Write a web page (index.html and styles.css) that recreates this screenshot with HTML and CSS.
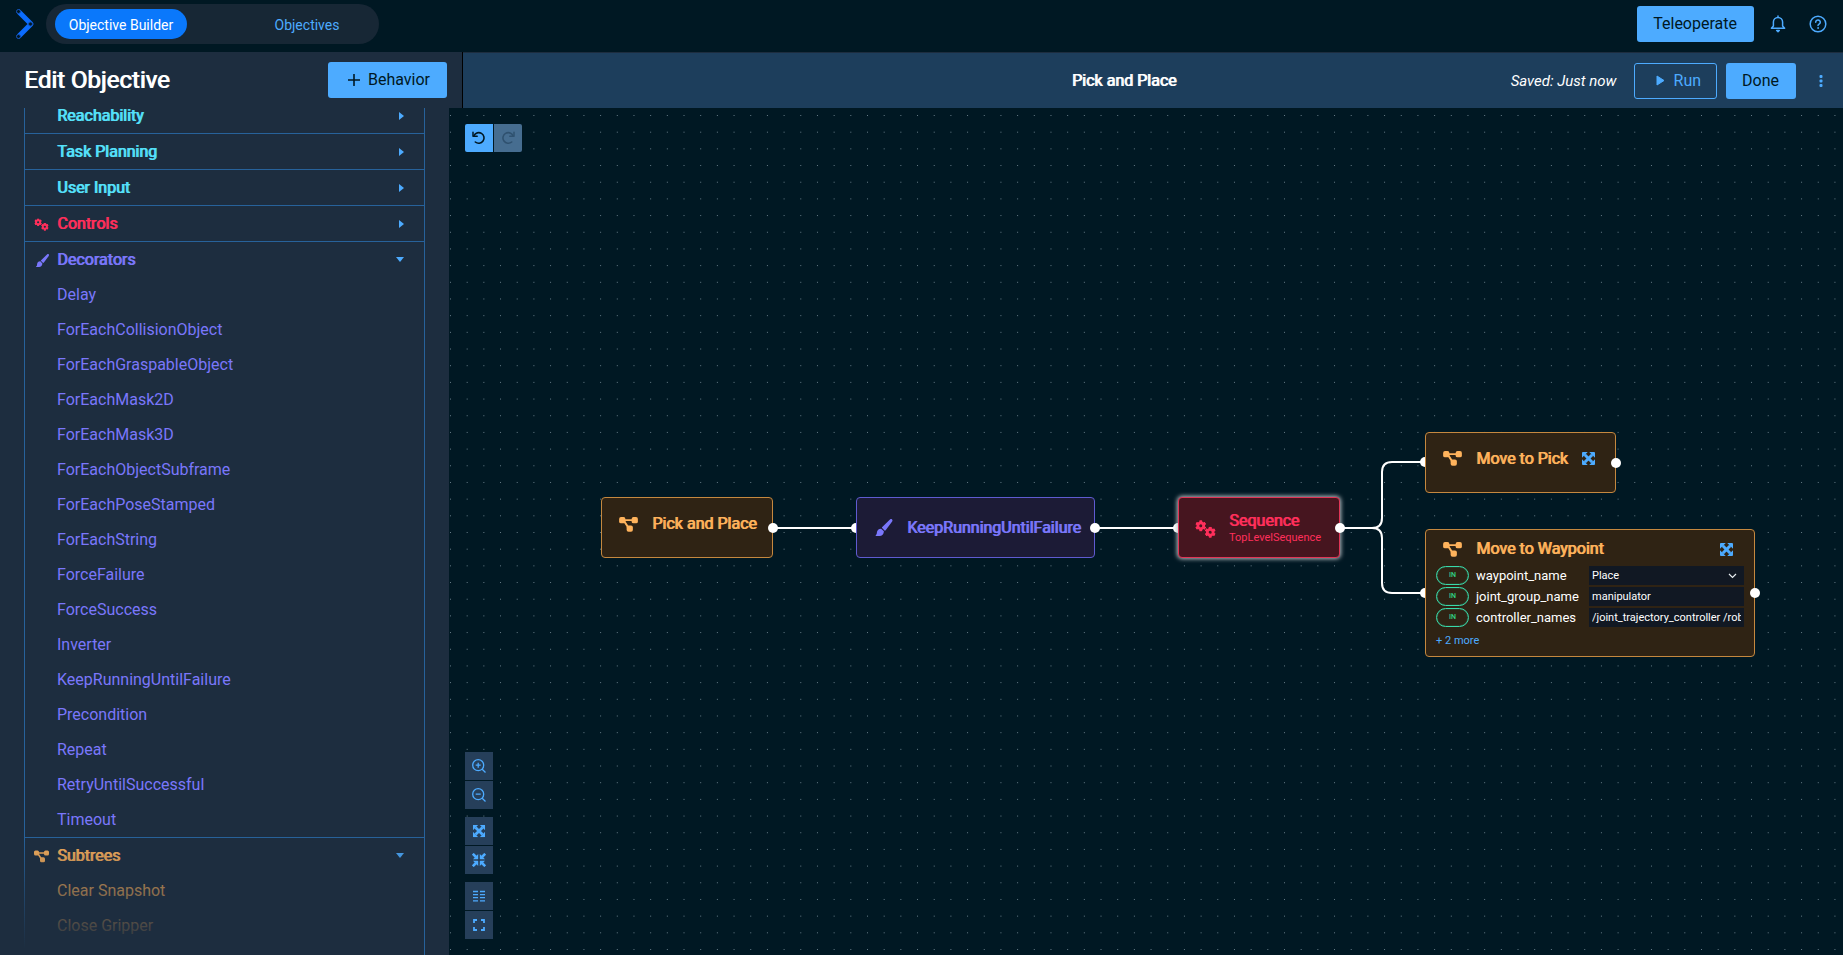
FILE: index.html
```html
<!DOCTYPE html>
<html lang="en">
<head>
<meta charset="utf-8">
<title>Objective Builder</title>
<link rel="stylesheet" href="styles.css">
</head>
<body>
<svg class="sprite" aria-hidden="true">
  <symbol id="gear" viewBox="0 0 20 20">
    <circle cx="10" cy="10" r="5" fill="none" stroke="currentColor" stroke-width="4.8"/>
    <g fill="currentColor">
      <rect x="7.500" y="0.4" width="5" height="19.2" rx="1" clip-path="url(#teeth)"/>
      <rect x="7.500" y="0.4" width="5" height="19.2" rx="1" clip-path="url(#teeth)" transform="rotate(60 10 10)"/>
      <rect x="7.500" y="0.4" width="5" height="19.2" rx="1" clip-path="url(#teeth)" transform="rotate(120 10 10)"/>
    </g>
  </symbol>
  <clipPath id="teeth"><path d="M0 0h20v5H0zM0 15h20v5H0z"/></clipPath>
  <symbol id="gears" viewBox="0 0 40 34">
    <use href="#gear" x="0" y="0" width="22" height="22"/>
    <use href="#gear" x="18" y="12" width="22" height="22"/>
  </symbol>
  <symbol id="brush" viewBox="0 0 24 24">
    <path fill="currentColor" d="M23.4.6c.8.8.7 1.900.1 2.900L14.600 15.600c-.4.500-.900.800-1.500.900l-4.100-4c.1-.6.400-1.100.900-1.500L20.800.5c.9-.7 1.900-.6 2.600.1zM8 13.600l3.800 3.800C11.900 21 9.300 24 5.600 24H.8C.1 24-.2 23.200.3 22.800c1.700-1.200 1.600-2.600 1.700-4C2.300 15.800 4.700 13.400 8 13.600z"/>
  </symbol>
  <symbol id="tree" viewBox="0 0 30 24">
    <path d="M5 5h20M7 5l9 14" fill="none" stroke="currentColor" stroke-width="3"/>
    <g fill="currentColor"><rect width="10" height="10" rx="3"/><rect x="20" width="10" height="10" rx="3"/><rect x="12" y="13.500" width="10" height="10" rx="3"/></g>
  </symbol>
  <symbol id="expand" viewBox="0 0 14 14">
    <path d="M3 3l8 8M11 3l-8 8" stroke="currentColor" stroke-width="3.200"/>
    <path fill="currentColor" d="M1 0H6.200L0 6.200V1Q0 0 1 0zM7.800 0H13q1 0 1 1V6.200zM0 7.800L6.200 14H1q-1 0-1-1zM14 7.800V13q0 1-1 1H7.800z"/>
  </symbol>
  <symbol id="compress" viewBox="0 0 14 14">
    <path d="M.8.8L4 4M13.200.8L10 4M.8 13.200L4 10M13.200 13.200L10 10" stroke="currentColor" stroke-width="2.600"/>
    <path fill="currentColor" d="M6.200 1v4.600q0 .6-.6.600H1zM7.800 1v4.600q0 .6.600.600H13zM6.200 13V8.400q0-.6-.6-.6H1zM7.800 13V8.400q0-.6.600-.6H13z"/>
  </symbol>
  <symbol id="undo" viewBox="0 0 14 14">
    <path d="M2 4.600A5.300 5.300 0 1 1 3.300 11" fill="none" stroke="currentColor" stroke-width="1.600" stroke-linecap="round"/>
    <path d="M1 1.200v4h4.200" fill="none" stroke="currentColor" stroke-width="1.500" stroke-linecap="round" stroke-linejoin="round"/>
  </symbol>
</svg>

<header class="topbar">
  <svg class="logo" viewBox="0 0 20 32" aria-label="Home">
    <path d="M4 4l12 12L4 28" fill="none" stroke="#0b6cff" stroke-width="5" stroke-linecap="round" stroke-linejoin="round"/>
    <g fill="#001823" stroke="#1552b5" stroke-width="1"><circle cx="3.500" cy="3.500" r="2"/><circle cx="15.500" cy="16" r="2"/><circle cx="3.500" cy="28.500" r="2"/></g>
  </svg>
  <nav class="tabs">
    <a class="tab tab-active" href="#builder">Objective Builder</a>
    <a class="tab" href="#objectives">Objectives</a>
  </nav>
  <div class="topbar-actions">
    <button class="btn">Teleoperate</button>
    <button class="icon-btn" aria-label="Notifications">
      <svg width="16" height="18" viewBox="0 0 16 18" fill="none" stroke="currentColor" stroke-width="1.500" stroke-linecap="round" stroke-linejoin="round"><path d="M8 1v1.200M3.400 11V7a4.600 4.600 0 0 1 9.200 0v4l2 2.300H1.400z"/><path d="M6.700 15.500h2.600L8 16.600z"/></svg>
    </button>
    <button class="icon-btn help" aria-label="Help">
      <svg width="18" height="18" viewBox="0 0 18 18" fill="none" stroke="currentColor" stroke-width="1.500" stroke-linecap="round"><circle cx="9" cy="9" r="7.800"/><path d="M6.700 7.300a2.300 2.100 0 1 1 3.600 1.600C9.500 9.400 9 9.600 9 10.500"/><circle cx="9" cy="13" r=".5" fill="currentColor" stroke-width=".8"/></svg>
    </button>
  </div>
</header>

<div class="subbar">
  <div class="side-head">
    <h1 class="side-title">Edit Objective</h1>
    <button class="btn btn-behavior"><svg width="12" height="12" viewBox="0 0 12 12"><path d="M6 .5v11M.5 6h11" stroke="currentColor" stroke-width="1.600" stroke-linecap="round"/></svg>Behavior</button>
  </div>
  <div class="toolbar">
    <h2 class="doc-title">Pick and Place</h2>
    <div class="toolbar-actions">
      <span class="saved">Saved: Just now</span>
      <button class="btn btn-outline"><svg width="9" height="11" viewBox="0 0 9 11"><path d="M1 1v9l7-4.500z" fill="currentColor" stroke="currentColor" stroke-linejoin="round"/></svg>Run</button>
      <button class="btn">Done</button>
      <button class="icon-btn more" aria-label="More"><svg width="4" height="12" viewBox="0 0 4 12" fill="currentColor"><rect x=".5" width="3" height="3" rx="1"/><rect x=".5" y="4.500" width="3" height="3" rx="1"/><rect x=".5" y="9" width="3" height="3" rx="1"/></svg></button>
    </div>
  </div>
</div>

<main class="workspace">
  <aside class="sidebar">
    <div class="tree-list">
      <button class="group cyan">Reachability<i class="arrow"></i></button>
      <button class="group cyan">Task Planning<i class="arrow"></i></button>
      <button class="group cyan">User Input<i class="arrow"></i></button>
      <button class="group red"><svg class="g-icon"><use href="#gears"/></svg>Controls<i class="arrow"></i></button>
      <button class="group violet"><svg class="g-icon g-brush"><use href="#brush"/></svg>Decorators<i class="arrow arrow-down"></i></button>
      <ul class="items violet">
        <li>Delay</li><li>ForEachCollisionObject</li><li>ForEachGraspableObject</li><li>ForEachMask2D</li><li>ForEachMask3D</li><li>ForEachObjectSubframe</li><li>ForEachPoseStamped</li><li>ForEachString</li><li>ForceFailure</li><li>ForceSuccess</li><li>Inverter</li><li>KeepRunningUntilFailure</li><li>Precondition</li><li>Repeat</li><li>RetryUntilSuccessful</li><li>Timeout</li>
      </ul>
      <button class="group amber"><svg class="g-icon"><use href="#tree"/></svg>Subtrees<i class="arrow arrow-down"></i></button>
      <ul class="items amber">
        <li>Clear Snapshot</li><li>Close Gripper</li>
      </ul>
    </div>
    <div class="fade"></div>
  </aside>

  <section class="canvas">
    <svg class="wires" aria-hidden="true">
      <defs><pattern id="dots" width="20" height="20" patternUnits="userSpaceOnUse" patternTransform="translate(1 7) scale(.834)"><circle cx=".6" cy=".6" r=".6" fill="#8aa0ac"/></pattern></defs>
      <rect width="100%" height="100%" fill="url(#dots)"/>
      <g fill="none" stroke="#fff" stroke-width="2">
        <path d="M323 420H407M646 420H729M891 420H923Q933 420 933 410V364Q933 354 943 354H976M923 420Q933 420 933 430V475Q933 485 943 485H976"/>
      </g>
      <g fill="#fff"><circle cx="407" cy="420" r="5"/><circle cx="729" cy="420" r="5"/><circle cx="976" cy="354" r="5"/><circle cx="976" cy="485" r="5"/></g>
    </svg>

    <article class="node n-amber n-root"><svg class="n-icon"><use href="#tree"/></svg><h3>Pick and Place</h3><i class="port"></i></article>
    <article class="node n-violet n-keep"><svg class="n-icon n-brush"><use href="#brush"/></svg><h3>KeepRunningUntilFailure</h3><i class="port"></i></article>
    <article class="node n-red n-seq"><svg class="n-icon n-gears"><use href="#gears"/></svg><div><h3>Sequence</h3><p>TopLevelSequence</p></div><i class="port"></i></article>
    <article class="node n-amber n-pick"><svg class="n-icon"><use href="#tree"/></svg><h3>Move to Pick</h3><button class="expand" aria-label="Expand"><svg><use href="#expand"/></svg></button><i class="port"></i></article>
    <article class="node n-amber n-way">
      <div class="way-head"><svg class="n-icon"><use href="#tree"/></svg><h3>Move to Waypoint</h3><button class="expand" aria-label="Expand"><svg><use href="#expand"/></svg></button></div>
      <div class="params">
        <span class="in">IN</span><label for="p1">waypoint_name</label>
        <div class="select"><select id="p1"><option>Place</option></select><svg width="9" height="6" viewBox="0 0 9 6"><path d="M1 1l3.500 3.500L8 1" fill="none" stroke="#e8edf0" stroke-width="1.200"/></svg></div>
        <span class="in">IN</span><label for="p2">joint_group_name</label><input id="p2" type="text" value="manipulator">
        <span class="in">IN</span><label for="p3">controller_names</label><input id="p3" type="text" value="/joint_trajectory_controller /robotiq_gripper_controller">
      </div>
      <a class="more-link" href="#more">+ 2 more</a>
      <i class="port"></i>
    </article>

    <div class="history">
      <button class="tool tool-on" aria-label="Undo"><svg><use href="#undo"/></svg></button>
      <button class="tool tool-on" aria-label="Redo" disabled><svg class="flip"><use href="#undo"/></svg></button>
    </div>
    <div class="controls">
      <div class="tool-group">
        <button class="tool" aria-label="Zoom in"><svg viewBox="0 0 14 14" fill="none" stroke="currentColor" stroke-width="1.300"><circle cx="6.200" cy="6.200" r="5.500"/><path d="M10.200 10.200L13.500 13.500M6.200 3.700v5M3.700 6.200h5"/></svg></button>
        <button class="tool" aria-label="Zoom out"><svg viewBox="0 0 14 14" fill="none" stroke="currentColor" stroke-width="1.300"><circle cx="6.200" cy="6.200" r="5.500"/><path d="M10.200 10.200L13.500 13.500M3.700 6.200h5"/></svg></button>
      </div>
      <div class="tool-group">
        <button class="tool" aria-label="Expand all"><svg viewBox="-1 -1 16 16"><use href="#expand" width="14" height="14"/></svg></button>
        <button class="tool" aria-label="Collapse all"><svg><use href="#compress"/></svg></button>
      </div>
      <div class="tool-group">
        <button class="tool" aria-label="Layout"><svg viewBox="0 0 14 14" stroke="currentColor" stroke-width="1.300"><path d="M1 2.500h5M1 5.600h5M1 8.700h5M1 11.800h5M8 2.500h5M8 5.600h5M8 8.700h5M8 11.800h5"/></svg></button>
        <button class="tool" aria-label="Fit view"><svg viewBox="0 0 14 14" fill="none" stroke="currentColor" stroke-width="1.800"><path d="M2 5V2h3M9 2h3v3M12 9v3H9M5 12H2V9"/></svg></button>
      </div>
    </div>
  </section>
</main>
</body>
</html>
```
FILE: styles.css
```css
* { box-sizing: border-box; }
body {
  margin: 0;
  height: 100vh;
  display: flex;
  flex-direction: column;
  overflow: hidden;
  background: #001823;
  color: #fff;
  font: 16px/20px Roboto, "Liberation Sans", sans-serif;
}
h1, h2, h3, p, ul { margin: 0; padding: 0; }
h1, h2, h3, .group { font-weight: 400; text-shadow: 1px 0 currentColor; }
button, input, select { font: inherit; margin: 0; }
button { cursor: pointer; }
.sprite { position: absolute; width: 0; height: 0; }

.topbar { height: 52px; flex: none; display: flex; align-items: center; padding: 0 13px 4px 15px; }
.logo { width: 20px; height: 32px; margin-right: 11px; }
.tabs { display: flex; align-items: center; justify-content: space-between; width: 333px; height: 40px; border-radius: 20px; background: #172735; padding: 0 6px 0 9px; }
.tab { width: 132px; height: 30px; border-radius: 15px; font-size: 14px; line-height: 32px; text-align: center; color: #4dabff; text-decoration: none; }
.tab-active { background: #0a78fb; color: #fff; }
.topbar-actions { margin-left: auto; display: flex; align-items: center; gap: 12px; }
.help { margin-left: 4px; }

.btn { height: 36px; padding: 0 17px 0 16px; border: 0; border-radius: 3px; background: #4dabff; color: #001823; display: inline-flex; align-items: center; }
.btn-outline { background: none; border: 1px solid #4dabff; color: #4dabff; gap: 9px; padding: 0 15px 0 21px; }
.btn-behavior { gap: 8px; padding: 0 17px 0 20px; }
.icon-btn { width: 24px; height: 24px; padding: 0; border: 0; background: none; color: #4dabff; display: grid; place-items: center; }

.subbar { display: flex; flex: none; height: 56px; }
.side-head { width: 463px; flex: none; display: flex; align-items: center; justify-content: space-between; padding: 0 15px 0 24px; background: #1d2d3f; border-right: 1px solid #000; }
.side-title { font-size: 24px; line-height: 28px; }
.toolbar { flex: 1; display: grid; grid-template-columns: 1fr auto 1fr; align-items: center; background: #1d3e5c; border-top: 1px solid #1d2d3f; }
.doc-title { grid-column: 2; font-size: 16px; padding-right: 58px; }
.toolbar-actions { display: flex; align-items: center; justify-content: flex-end; gap: 9px; padding-right: 10px; white-space: nowrap; }
.saved { font-style: italic; font-size: 15px; margin-right: 8px; }
.more { margin-left: 4px; }

.workspace { flex: 1; min-height: 0; display: flex; }
.sidebar { position: relative; width: 449px; flex: none; padding-left: 24px; background: #1d2d3f; overflow: hidden; }
.tree-list { width: 401px; min-height: calc(100% + 11px); border: solid #27629b; border-width: 0 1px; margin-top: -11px; }
.group { display: flex; align-items: center; position: relative; width: 100%; height: 36px; border: 0; border-top: 1px solid #27629b; background: none; padding: 0 20px 0 32px; color: inherit; text-align: left; }
.group.cyan { color: #55e1fa; }
.g-icon { position: absolute; left: 9px; top: 12px; width: 15px; height: 13px; }
.g-brush { left: 11px; width: 13px; }
.arrow { margin-left: auto; border: solid transparent; border-width: 4px 0 4px 5px; border-left-color: #4dabff; }
.arrow-down { border-width: 5px 4px 0; border-top-color: #4dabff; border-left-color: transparent; }
.items { list-style: none; }
.items li { height: 35px; line-height: 36px; padding-left: 32px; }
.cyan { color: #55e1fa; }
.group.red { color: #ff2f5b; }
.violet, .group.violet { color: #7a77fb; }
.amber, .group.amber { color: #ffb35c; }
.fade { position: absolute; left: 24px; bottom: 0; width: 400px; height: 120px; background: linear-gradient(rgba(29, 45, 63, 0), #1d2d3f 95%); pointer-events: none; }

.canvas { position: relative; flex: 1; min-width: 0; overflow: hidden; }
.wires { position: absolute; inset: 0; width: 100%; height: 100%; }
.node { position: absolute; border: 1px solid; border-radius: 4px; height: 61px; display: flex; align-items: center; gap: 14px; padding-left: 17px; }
.node h3 { font-size: 16px; line-height: 18px; white-space: nowrap; }
.n-amber { background: #2f2314; border-color: #c5883f; color: #ffb35c; }
.n-violet { background: #1c1b36; border-color: #5f5bd0; color: #7a77fb; }
.n-red { background: #46151f; border-color: #e03556; color: #ff2f5b; box-shadow: 0 0 4px 1px #b9bfc4; }
.n-icon { width: 19px; height: 15px; flex: none; }
.n-brush { width: 18px; height: 17px; }
.n-gears { width: 21px; height: 18px; }
.n-root { left: 152px; top: 389px; width: 172px; padding-bottom: 7px; }
.n-keep { left: 407px; top: 389px; width: 239px; padding-left: 18px; }
.n-seq { left: 729px; top: 389px; width: 162px; gap: 13px; padding: 2px 0 0 16px; }
.n-seq p { font-size: 11px; line-height: 16px; }
.n-pick { left: 976px; top: 324px; width: 191px; padding-bottom: 8px; }
.n-way { left: 976px; top: 421px; width: 330px; height: auto; display: block; padding: 8px 10px 6px; }
.way-head { display: flex; align-items: center; gap: 14px; height: 24px; padding: 0 11px 2px 7px; }
.way-head .expand { margin-left: auto; }
.expand { border: 0; background: none; padding: 0; color: #4dabff; width: 13px; height: 13px; display: block; }
.expand svg, .tool svg { width: 100%; height: 100%; display: block; }
.port { position: absolute; right: -6px; top: 50%; width: 10px; height: 10px; margin-top: -5px; border-radius: 50%; background: #fff; }
.params { display: grid; grid-template-columns: 33px 106px 155px; column-gap: 7px; row-gap: 2px; margin-top: 4px; color: #fff; }
.params label { font-size: 13px; line-height: 20px; height: 19px; }
.in { height: 19px; border: 1px solid #39d9a9; border-radius: 10px; color: #2fd98a; font-size: 7px; line-height: 17px; text-align: center; font-weight: 500; box-shadow: inset 0 0 1px #39d9a9; }
.params input, .select, .select select { width: 100%; height: 19px; }
.params input, .params select { border: 0; border-radius: 0; background: #111823; color: #fff; font-size: 11px; padding: 0 3px; appearance: none; }
.select { position: relative; }
.select select { display: block; }
.select svg { position: absolute; right: 7px; top: 7px; pointer-events: none; }
.more-link { display: inline-block; margin-top: 5px; font-size: 11px; line-height: 18px; color: #4dabff; text-decoration: none; }

.history { position: absolute; left: 16px; top: 16px; display: flex; gap: 1px; }
.controls { position: absolute; left: 16px; bottom: 16px; display: flex; flex-direction: column; gap: 8px; }
.tool-group { display: flex; flex-direction: column; gap: 1px; }
.tool { width: 28px; height: 28px; padding: 7px; border: 0; background: #263f5a; color: #4dabff; }
.tool-on { background: #4dabff; color: #001823; border-radius: 2px 0 0 2px; }
.tool-on + .tool-on { border-radius: 0 2px 2px 0; }
.tool-on:disabled { background: #466d90; color: #2f516f; }
.flip { transform: scaleX(-1); }
```
